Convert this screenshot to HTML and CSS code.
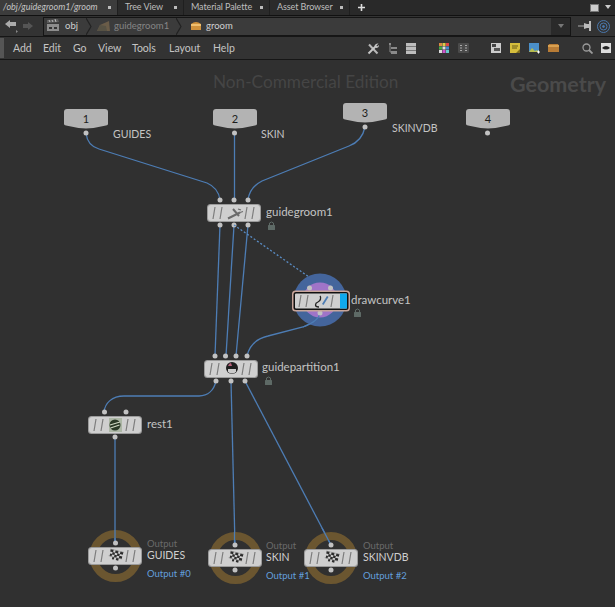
FILE: index.html
```html
<!DOCTYPE html>
<html lang="en">
<head>
<meta charset="utf-8">
<title>groom</title>
<link rel="stylesheet" href="styles.css">
</head>
<body>
<div class="app">
  <div class="tabs">
    <div class="tab tab-active"><span class="tab-title">/obj/guidegroom1/groom</span><i class="tab-dot"></i></div>
    <div class="tab tab-tree"><span class="tab-title">Tree View</span><i class="tab-dot"></i></div>
    <div class="tab tab-palette"><span class="tab-title">Material Palette</span><i class="tab-dot"></i></div>
    <div class="tab tab-asset"><span class="tab-title">Asset Browser</span><i class="tab-dot"></i></div>
    <svg class="tab-plus" width="9" height="9" viewBox="0 0 9 9"><path d="M4.5 1v7M1 4.5h7" stroke="#ddd" stroke-width="1.6"/></svg>
    <div class="tab-right">
      <svg width="9" height="8" viewBox="0 0 9 8"><rect x="0.5" y="0.5" width="8" height="7" fill="#ccc" stroke="#777"/></svg>
      <svg width="6" height="5" viewBox="0 0 6 5"><path d="M0 0h6L3 4z" fill="#ccc"/></svg>
    </div>
  </div>

  <div class="pathbar">
    <div class="nav">
      <svg width="14" height="14" viewBox="0 0 14 14"><path d="M1 5l5-4v2h6v4H6v2z" fill="#aaa"/><path d="M12 11l2 1.500-2 1.500z" fill="#888"/></svg>
      <svg width="12" height="12" viewBox="0 0 12 12"><path d="M11 6L6 2v2H1v4h5v2z" fill="#555"/></svg>
    </div>
    <div class="path">
      <div class="crumb crumb-obj">
        <svg width="13" height="13" viewBox="0 0 13 13"><rect x="0" y="5" width="12" height="7" fill="#8d8d8d"/><path d="M0 1l11-1 1 3-12 1z" fill="#5d5d5d"/><path d="M2 1l1 2M5 1l1 2M8 0l1 3" stroke="#bbb"/><rect x="2" y="8" width="3" height="2" fill="#333"/><rect x="7" y="8" width="3" height="2" fill="#333"/></svg>
        <span>obj</span>
      </div>
      <svg class="chev" width="6" height="17" viewBox="0 0 6 17"><path d="M0 0l5 8.500-5 8.500" fill="none" stroke="#222" stroke-width="1.200"/></svg>
      <div class="crumb crumb-gg">
        <svg width="13" height="12" viewBox="0 0 13 12"><path d="M0 11l3-6 9-4 1 10z" fill="#6a5c48"/><path d="M0 11l3-6 6 1 1 5z" fill="#575244"/></svg>
        <span class="dim">guidegroom1</span>
      </div>
      <svg class="chev" width="6" height="17" viewBox="0 0 6 17"><path d="M0 0l5 8.500-5 8.500" fill="none" stroke="#222" stroke-width="1.200"/></svg>
      <div class="crumb crumb-groom">
        <svg width="12" height="10" viewBox="0 0 12 10"><path d="M1 3q5-4 10 0v6H1z" fill="#d0923c"/><rect x="1" y="3" width="10" height="2" fill="#f0c070"/></svg>
        <span>groom</span>
      </div>
      <div class="path-drop"><svg width="6" height="4" viewBox="0 0 6 4"><path d="M0 0h6L3 4z" fill="#777"/></svg></div>
    </div>
    <div class="pathbar-right">
      <svg width="14" height="10" viewBox="0 0 14 10"><path d="M0 5h6" stroke="#aaa"/><path d="M6 2l3 1h2V0h2v10h-2V7H9L6 8z" fill="#bbb"/></svg>
      <svg width="13" height="13" viewBox="0 0 13 13" fill="none" stroke="#4a78ad"><circle cx="6.500" cy="6.500" r="6"/><circle cx="6.500" cy="6.500" r="3.500"/><circle cx="6.500" cy="6.500" r="1" fill="#4a78ad"/></svg>
    </div>
  </div>

  <div class="menubar">
    <i class="grip"></i>
    <nav class="menu">
      <span class="m-add">Add</span><span class="m-edit">Edit</span><span class="m-go">Go</span><span class="m-view">View</span><span class="m-tools">Tools</span><span class="m-layout">Layout</span><span>Help</span>
    </nav>
    <div class="tools">
      <svg class="t-wrench" width="12" height="12" viewBox="0 0 12 12"><path d="M2 1.500l8.500 9" stroke="#b8b8b8" stroke-width="2"/><path d="M1.500 10.500L9 3" stroke="#c6c6c6" stroke-width="2"/><path d="M7.500 2.500Q9 0 11.500 0.500L9.500 2.500 10 3.500 12 2Q12 5 9 5z" fill="#c6c6c6"/></svg>
      <svg class="t-tree" width="9" height="11" viewBox="0 0 9 11"><path d="M1 0h2v2H1zM3 4h6v2H3zM3 8h6v3H3z" fill="#8a8a8a"/><path d="M2 2v7h2" stroke="#8a8a8a" fill="none"/></svg>
      <svg class="t-list" width="10" height="11" viewBox="0 0 10 11"><rect width="10" height="11" fill="#bdbdbd"/><path d="M0 3.500h10M0 7.500h10" stroke="#777"/></svg>
      <svg class="t-color" width="10" height="10" viewBox="0 0 10 10"><rect width="10" height="10" fill="#444"/><rect width="3" height="3" fill="#d84"/><rect x="3.500" width="3" height="3" fill="#dc4"/><rect x="7" width="3" height="3" fill="#d44"/><rect y="3.500" width="3" height="3" fill="#4a4"/><rect x="3.500" y="3.500" width="3" height="3" fill="#ddd"/><rect x="7" y="3.500" width="3" height="3" fill="#48c"/><rect y="7" width="3" height="3" fill="#ddd"/><rect x="3.500" y="7" width="3" height="3" fill="#c5c"/><rect x="7" y="7" width="3" height="3" fill="#6cc"/></svg>
      <svg class="t-grid" width="11" height="10" viewBox="0 0 11 10"><rect width="11" height="10" rx="1" fill="#4b4b4b"/><path d="M2 2.500h2M7 2.500h2M2 5h2M7 5h2M2 7.500h2M7 7.500h2" stroke="#aaa"/></svg>
      <svg class="t-panel" width="10" height="10" viewBox="0 0 10 10"><rect width="10" height="10" fill="#ccc"/><rect x="1" y="1" width="4" height="3" fill="#444"/><rect x="3" y="5" width="6" height="3" fill="#555"/></svg>
      <svg class="t-note" width="10" height="10" viewBox="0 0 10 10"><rect width="10" height="10" fill="#d5bd3c"/><path d="M2 3h6M2 5h5" stroke="#6a5c18"/><path d="M10 6v4H6z" fill="#7c6c1e"/></svg>
      <svg class="t-image" width="11" height="11" viewBox="0 0 11 11"><rect width="10" height="9" fill="#4b8fc8"/><path d="M0 9l3-4 3 3 2-1 2 2z" fill="#b8bc50"/><path d="M8 9h3M9.500 7.500v3" stroke="#fff"/></svg>
      <svg class="t-box" width="11" height="9" viewBox="0 0 11 9"><path d="M1 1h9l1 2v6H0V3z" fill="#b87c36"/><rect x="0" y="2" width="11" height="2" fill="#d8a050"/></svg>
      <svg class="t-find" width="11" height="11" viewBox="0 0 11 11" fill="none"><circle cx="4.500" cy="4.500" r="3.500" stroke="#9a9a9a" stroke-width="1.300"/><path d="M7 7l3.500 3.500" stroke="#9a9a9a" stroke-width="1.800"/></svg>
      <svg class="t-eye" width="10" height="10" viewBox="0 0 10 10"><rect width="10" height="10" fill="#ddd"/><path d="M1 5q4-4 8 0-4 3-8 0z" fill="#222"/></svg>
    </div>
  </div>

  <svg class="canvas" width="615" height="547" viewBox="0 60 615 547">
    <defs>
      <symbol id="body" viewBox="0 0 54 18" width="54" height="18" overflow="visible">
        <rect class="n-edge" x="0" y="0" width="54" height="18" rx="3.500"/>
        <rect class="n-fill" x="1" y="1" width="52" height="16" rx="3"/>
        <path class="n-slash" d="M8 3L6 15M15 3L13 15M40 3L38 15M47 3L45 15"/>
      </symbol>
      <symbol id="sub" viewBox="0 0 44 20" width="44" height="20">
        <path class="sub-shape" d="M3 0h38q3 0 3 3v12q0 1-2 1.500Q32 19 22 19.500 12 19 2 16.500 0 16 0 15V3q0-3 3-3z"/>
      </symbol>
      <g id="flag">
        <g transform="rotate(14)">
          <path d="M-6.500-4.500h3v2.500h-3zM-1.500-4.500h3v2.500h-3zM3.500-4.500h3v2.500h-3zM-4-2h2.500v2.500H-4zM1-2h2.500v2.500H1zM-6-0h2v2.500h-2zM-1.500 0h2.500v2.500h-2.500zM3.500 0h3v2.500h-3zM1 2.500h2.500V5H1zM-3 2.500h2V5h-2z" fill="#2b2b2b"/>
          <path d="M-7-4.500h14M-7 2.500h14" stroke="#8a8a8a" stroke-width="0.500"/>
        </g>
      </g>
    </defs>

    <g class="wires">
      <path d="M86 133C87 142 92 147 99 149L207 183C214 186 219 192 220 200"/>
      <path d="M234.500 133V200"/>
      <path d="M365 127C363 137 357 143 349 146L262 181C254 185 249 192 248 200"/>
      <path d="M220 225L215 356"/>
      <path d="M234 225L226 356"/>
      <path d="M248 225L236 356"/>
      <path d="M320 313C319 320 311 324 303 327L268 336C255 339 249 347 247 356"/>
      <path d="M216 381C214 390 208 396 199 396H124C112 396 105 403 104 412"/>
      <path d="M231 381L235 545"/>
      <path d="M245 381L331 545"/>
      <path d="M115 437V543"/>
    </g>

    <text class="wm-edition" x="213" y="88">Non-Commercial Edition</text>
    <text class="wm-context" x="510" y="92">Geometry</text>

    <!-- subnet inputs -->
    <use href="#sub" x="64" y="109"/><text class="sub-num" x="86" y="123">1</text><circle class="dot" cx="86" cy="133" r="2.500"/><text class="lbl-caps" x="113" y="138">GUIDES</text>
    <use href="#sub" x="213" y="109"/><text class="sub-num" x="235" y="123">2</text><circle class="dot" cx="234.500" cy="133" r="2.500"/><text class="lbl-caps" x="261" y="138">SKIN</text>
    <use href="#sub" x="343" y="103"/><text class="sub-num" x="365" y="117">3</text><circle class="dot" cx="365" cy="127" r="2.500"/><text class="lbl-caps" x="392" y="132">SKINVDB</text>
    <use href="#sub" x="466" y="109"/><text class="sub-num" x="488" y="123">4</text><circle class="dot" cx="487.500" cy="133" r="2.500"/>

    <!-- guidegroom1 -->
    <use href="#body" x="207" y="204"/>
    <path class="ic-tool" d="M228 218.500l12-6M233 209l6 7"/><path class="ic-tool-thin" d="M240 212.500l3-1M238 209l3 1"/>
    <circle class="dot" cx="220" cy="200" r="2.500"/><circle class="dot" cx="234" cy="200" r="2.500"/><circle class="dot" cx="248" cy="200" r="2.500"/>
    <circle class="dot" cx="220" cy="225" r="2.500"/><circle class="dot" cx="234" cy="225" r="2.500"/><circle class="dot" cx="248" cy="225" r="2.500"/>
    <text class="lbl" x="266" y="216">guidegroom1</text>
    <g transform="translate(268 221)"><path class="lock-ring" d="M1.500 4V2Q3.500 0 5.500 2V4"/><rect class="lock" x="0" y="4" width="7" height="5" rx="0.500"/></g>

    <!-- drawcurve1 -->
    <path class="dotted" d="M234 225L309 277"/>
    <circle class="halo-blue" cx="320" cy="300" r="26.500"/>
    <circle class="halo-purple" cx="320" cy="300" r="17.500"/>
    <path class="wire-top" d="M320 313C319 320 311 324 303 327"/>
    <circle class="dot" cx="309.500" cy="288" r="2.500"/><circle class="dot" cx="330.500" cy="288" r="2.500"/><circle class="dot" cx="320" cy="313" r="2.500"/>
    <rect class="sel-outer" x="292" y="290.500" width="58" height="21" rx="3.500"/>
    <rect class="sel-inner" x="293.500" y="292" width="55" height="18" rx="2.500"/>
    <rect class="n-fill" x="295" y="293.500" width="52" height="15" rx="1"/>
    <path class="n-slash" d="M301 295L299 307M308 295L306 307M333 295L331 307"/>
    <rect class="flag-blue" x="340" y="293.500" width="7" height="15"/>
    <path class="ic-curve" d="M319 307C314 307 315 303 318 302S321 297 320 296"/>
    <path class="ic-pen" d="M322 304l5-8 1.500 1-5 8z"/>
    <text class="lbl" x="351" y="304">drawcurve1</text>
    <g transform="translate(354 308)"><path class="lock-ring" d="M1.500 4V2Q3.500 0 5.500 2V4"/><rect class="lock" x="0" y="4" width="7" height="5" rx="0.500"/></g>

    <!-- guidepartition1 -->
    <use href="#body" x="204" y="360"/>
    <circle cx="232" cy="368" r="6" fill="#1e1e1e"/><path d="M228 369h8v3q-4 3-8 0z" fill="#ccc"/><path d="M228 366q1-3 3-3l1 3z" fill="#b8607a"/>
    <circle class="dot" cx="215" cy="356" r="2.500"/><circle class="dot" cx="225.500" cy="356" r="2.500"/><circle class="dot" cx="236" cy="356" r="2.500"/><circle class="dot" cx="247" cy="356" r="2.500"/>
    <circle class="dot" cx="216" cy="381" r="2.500"/><circle class="dot" cx="231" cy="381" r="2.500"/><circle class="dot" cx="245" cy="381" r="2.500"/>
    <text class="lbl" x="262" y="371">guidepartition1</text>
    <g transform="translate(265 376)"><path class="lock-ring" d="M1.500 4V2Q3.500 0 5.500 2V4"/><rect class="lock" x="0" y="4" width="7" height="5" rx="0.500"/></g>

    <!-- rest1 -->
    <use href="#body" x="88" y="416"/>
    <rect x="109" y="418" width="13" height="14" fill="#8aa07c" opacity="0.500"/>
    <circle cx="115" cy="425" r="5.500" fill="#2a3a28"/><path d="M110 425l10-3M110.500 428l9-3" stroke="#cfd8c4" stroke-width="1.200"/>
    <circle class="dot" cx="104.500" cy="412" r="2.500"/><circle class="dot" cx="126" cy="412" r="2.500"/><circle class="dot" cx="115" cy="437" r="2.500"/>
    <text class="lbl" x="147" y="428">rest1</text>

    <!-- outputs -->
    <circle class="ring" cx="115.500" cy="556" r="22"/>
    <path class="wire-top" d="M115 530V543"/>
    <use href="#body" x="88" y="547"/><use href="#flag" transform="translate(116 555)"/>
    <circle class="dot" cx="115.500" cy="543" r="2.500"/><circle class="dot" cx="115.500" cy="568" r="2.500"/>
    <text class="lbl-dim" x="147" y="547">Output</text><text class="lbl-out" x="147" y="559">GUIDES</text><text class="lbl-blue" x="147" y="577">Output #0</text>

    <circle class="ring" cx="235.500" cy="558" r="22"/>
    <path class="wire-top" d="M234.500 532V545"/>
    <use href="#body" x="208" y="549"/><use href="#flag" transform="translate(236 557)"/>
    <circle class="dot" cx="235" cy="545" r="2.500"/><circle class="dot" cx="235" cy="570" r="2.500"/>
    <text class="lbl-dim" x="266" y="549">Output</text><text class="lbl-out" x="266" y="561">SKIN</text><text class="lbl-blue" x="266" y="579">Output #1</text>

    <circle class="ring" cx="331" cy="558" r="22"/>
    <path class="wire-top" d="M322 528L331 545"/>
    <use href="#body" x="304" y="549"/><use href="#flag" transform="translate(332 557)"/>
    <circle class="dot" cx="331" cy="545" r="2.500"/><circle class="dot" cx="331" cy="570" r="2.500"/>
    <text class="lbl-dim" x="363" y="549">Output</text><text class="lbl-out" x="363" y="561">SKINVDB</text><text class="lbl-blue" x="363" y="579">Output #2</text>
  </svg>
</div>
</body>
</html>
```
FILE: styles.css
```css
html, body {
  margin: 0;
  padding: 0;
  background: #303030;
  overflow: hidden;
}
.app {
  width: 615px;
  height: 607px;
  display: flex;
  flex-direction: column;
  font-family: "Lato", "Noto Sans", sans-serif;
  color: #c8c8c8;
}
.tabs {
  height: 15px;
  flex: none;
  display: flex;
  align-items: stretch;
  background: #292929;
  font-size: 9px;
  line-height: 14px;
}
.tab {
  display: flex;
  align-items: center;
  justify-content: space-between;
  box-sizing: border-box;
  background: #2b2b2b;
  border-right: 1px solid #1f1f1f;
  color: #bdbdbd;
  padding: 0 4px 1px 7px;
  letter-spacing: -0.1px;
  flex: none;
}
.tab-active { width: 118px; background: #3c3c3c; padding-left: 3px; padding-right: 4px; color: #c4c4c4; letter-spacing: 0; }
.tab-active .tab-title { font-style: italic; }
.tab-tree { width: 66px; }
.tab-palette { width: 86px; }
.tab-asset { width: 80px; }
.tab-dot { width: 3px; height: 3px; background: #bbb; flex: none; margin-right: 2px; }
.tab-plus { margin: 3px 0 0 7px; }
.tab-right { margin-left: auto; display: flex; gap: 6px; align-items: center; padding-right: 4px; }

.pathbar {
  height: 21px;
  flex: none;
  display: flex;
  align-items: center;
  background: #333;
  border-top: 1px solid #111;
  box-sizing: border-box;
}
.nav { width: 43px; flex: none; display: flex; align-items: center; gap: 4px; padding-left: 4px; box-sizing: border-box; }
.path {
  width: 528px;
  height: 19px;
  flex: none;
  box-sizing: border-box;
  border: 1px solid #151515;
  background: #3b3b3b;
  display: flex;
  align-items: center;
  font-size: 9.500px;
  position: relative;
}
.crumb { display: flex; align-items: center; gap: 4px; color: #d0d0d0; padding-bottom: 1px; flex: none; box-sizing: border-box; }
.crumb-obj { padding-left: 3px; width: 42px; gap: 5px; }
.crumb-gg { padding-left: 5px; width: 84px; }
.crumb-groom { padding-left: 8px; }
.dim { color: #858585; }
.chev { flex: none; }
.path-drop {
  margin-left: auto;
  width: 19px;
  align-self: stretch;
  background: #2a2a2a;
  display: flex;
  align-items: center;
  justify-content: center;
}
.pathbar-right { flex: 1; display: flex; align-items: center; justify-content: flex-end; gap: 5px; padding-right: 5px; }

.menubar {
  height: 24px;
  flex: none;
  box-sizing: border-box;
  display: flex;
  align-items: center;
  background: #333;
  border-top: 1px solid #161616;
  border-bottom: 1px solid #161616;
  position: relative;
}
.grip { width: 4px; height: 20px; background: #555; flex: none; }
.menu { display: flex; padding-left: 9px; font-size: 10.500px; color: #c4c4c4; }
.menu span { display: block; }
.m-add { width: 30px; }
.m-edit { width: 30px; }
.m-go { width: 25px; }
.m-view { width: 34px; }
.m-tools { width: 37px; }
.m-layout { width: 44px; }
.tools { position: absolute; inset: 0; }
.tools svg { position: absolute; top: 6px; }
.t-wrench { left: 367px; }
.t-tree { left: 388px; }
.t-list { left: 406px; }
.t-color { left: 439px; }
.t-grid { left: 458px; }
.t-panel { left: 491px; }
.t-note { left: 510px; }
.t-image { left: 529px; }
.t-box { left: 548px; }
.t-find { left: 582px; }
.t-eye { left: 601px; }

.canvas { display: block; flex: none; }
.canvas text { font-family: "Lato", "Noto Sans", sans-serif; }
.wires path, .wire-top { fill: none; stroke: #4d7db5; stroke-width: 1.300; }
.dotted { fill: none; stroke: #5a8cc4; stroke-width: 1.300; stroke-dasharray: 2 2; }
.wm-edition { font-size: 17.200px; fill: #454545; }
.wm-context { font-size: 21.500px; font-weight: 700; fill: #4a4a4a; }
.n-edge { fill: #9b9b9b; }
.n-fill { fill: #cfcfcf; }
.n-slash { fill: none; stroke: #7d7d7d; stroke-width: 1.200; }
.sub-shape { fill: #b3b3b3; }
.sub-num { font-size: 11px; fill: #1c1c1c; text-anchor: middle; }
.dot { fill: #c2c2c2; }
.lbl { font-size: 11.500px; fill: #c4c4c4; }
.lbl-caps { font-size: 10.500px; fill: #c4c4c4; }
.lbl-out { font-size: 10.500px; fill: #cfcfcf; }
.lbl-dim { font-size: 9.500px; fill: #6a6a6a; }
.lbl-blue { font-size: 9.500px; fill: #639fdc; }
.lock { fill: #5e6a66; }
.lock-ring { fill: none; stroke: #5e6a66; }
.ic-tool { fill: none; stroke: #6a6a6a; stroke-width: 2; }
.ic-tool-thin { fill: none; stroke: #6a6a6a; stroke-width: 1.200; }
.halo-blue { fill: #44659c; }
.halo-purple { fill: #a074c8; }
.sel-outer { fill: #c8a59a; }
.sel-inner { fill: #111; }
.flag-blue { fill: #10a8ec; }
.ic-curve { fill: none; stroke: #222; stroke-width: 1.300; }
.ic-pen { fill: #4d7db5; }
.ring { fill: none; stroke: #6b5630; stroke-width: 8; }
```
